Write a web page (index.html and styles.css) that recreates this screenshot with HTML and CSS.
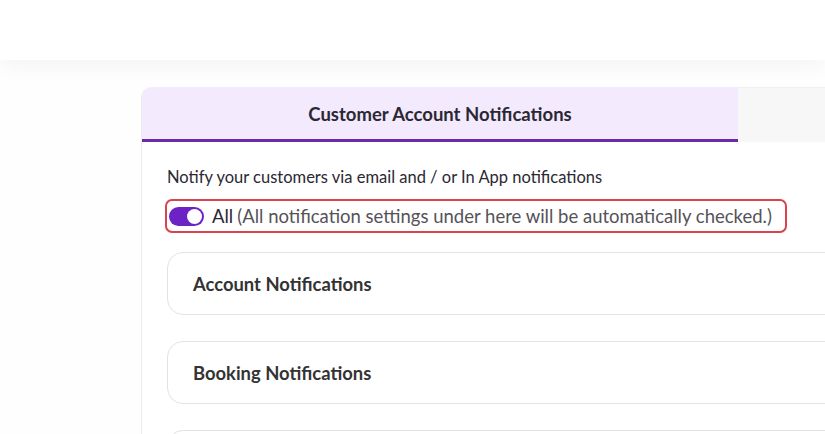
FILE: index.html
```html
<!DOCTYPE html>
<html lang="en">
<head>
    <meta charset="UTF-8">
    <meta name="viewport" content="width=device-width, initial-scale=1.0">
    <title>Notification Settings</title>
    <link rel="stylesheet" href="styles.css">
</head>
<body>
    <header class="topbar"></header>

    <main class="page">
        <div class="card">
            <div class="tabs">
                <div class="tab active">Customer Account Notifications</div>
                <div class="tab"></div>
            </div>

            <div class="card-body">
                <p class="intro">Notify your customers via email and / or In App notifications</p>

                <label class="all-row">
                    <span class="switch on"><span class="knob"></span></span>
                    <span class="all-label">All</span>
                    <span class="all-hint">(All notification settings under here will be automatically checked.)</span>
                </label>

                <div class="section">Account Notifications</div>
                <div class="section">Booking Notifications</div>
                <div class="section"></div>
            </div>
        </div>
    </main>
</body>
</html>
```

FILE: styles.css
```css
:root {
    --text: #2b2833;
    --muted: #555258;
    --purple: #6a2ba8;
    --switch: #6c22c4;
    --tab-bg: #f3eafd;
    --tab-idle: #f7f7f7;
    --border: #e3e3e3;
    --alert: #d8434e;
}

* {
    margin: 0;
    padding: 0;
    box-sizing: border-box;
    font-family: Lato, "Open Sans", Arial, sans-serif;
}

body {
    background: #fefefe;
    color: var(--text);
    overflow: hidden;
}

.topbar {
    height: 60px;
    background: #fff;
    box-shadow: 0 6px 22px rgba(0, 0, 0, 0.045);
    position: relative;
}

.page {
    padding: 27px 0 0 141px;
}

.card {
    width: 760px;
    border-left: 1px solid #ececec;
    border-top-left-radius: 10px;
    background: #fff;
}

.tabs {
    display: flex;
    height: 55px;
}

.tab {
    flex: 1;
    background: var(--tab-idle);
    border-top: 1px solid #f0f0f0;
}

.tab.active {
    flex: 0 0 596px;
    display: flex;
    align-items: center;
    justify-content: center;
    background: var(--tab-bg);
    border-top: none;
    border-top-left-radius: 10px;
    border-bottom: 3px solid var(--purple);
    padding-top: 2px;
    font-size: 18.5px;
    font-weight: 700;
    color: var(--text);
}

.card-body {
    padding: 25px 0 0 25px;
}

.intro {
    font-size: 16.5px;
    color: var(--text);
    line-height: 20px;
}

.all-row {
    display: inline-flex;
    align-items: center;
    gap: 8px;
    margin-top: 12px;
    margin-left: -2px;
    padding: 4px 13px 4px 2px;
    border: 2px solid var(--alert);
    border-radius: 7px;
    font-size: 18.5px;
    line-height: 22px;
}

.switch {
    position: relative;
    width: 35px;
    height: 19px;
    border-radius: 10px;
    background: var(--switch);
}

.switch .knob {
    position: absolute;
    top: 2px;
    right: 2px;
    width: 15px;
    height: 15px;
    border-radius: 50%;
    background: #fff;
}

.all-label {
    color: var(--text);
}

.all-hint {
    margin-left: -4px;
    color: var(--muted);
}

.section {
    height: 63px;
    margin-top: 19px;
    display: flex;
    align-items: center;
    padding-left: 25px;
    border: 1px solid var(--border);
    border-radius: 16px;
    font-size: 18.4px;
    font-weight: 700;
    color: #333;
}

.section + .section {
    margin-top: 26px;
}
```
